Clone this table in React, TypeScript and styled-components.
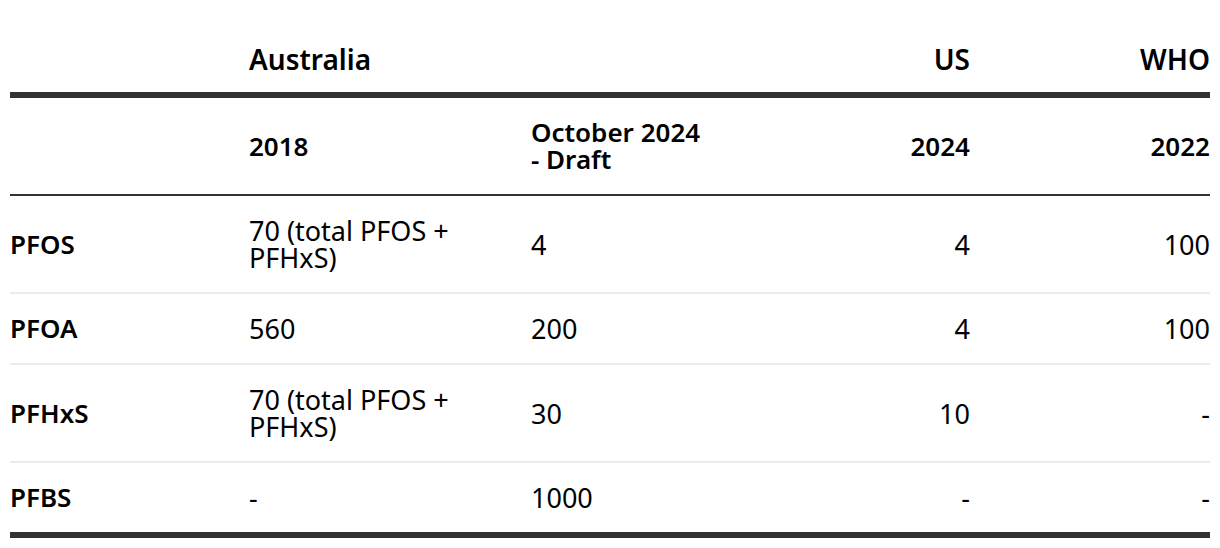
import React from "react";
import styled, { createGlobalStyle } from "styled-components";

const Global = createGlobalStyle`
  html, body { margin: 0; padding: 0; background: #fff; }
  body { font-family: "Noto Sans", "Open Sans", sans-serif; color: #000; }
`;

const Page = styled.div`
  padding: 44px 10px 0;
`;

const Table = styled.table`
  width: 1200px;
  border-collapse: collapse;
  table-layout: fixed;
`;

const Th = styled.th<{ $align?: "left" | "right" }>`
  text-align: ${(p) => p.$align ?? "left"};
  font-weight: 600;
  font-size: 26px;
  padding: 0;
  vertical-align: middle;
`;

const GroupRow = styled.tr`
  & > th {
    font-size: 28px;
    padding-bottom: 17px;
    line-height: 31px;
    border-bottom: 6px solid #333;
  }
`;

const YearRow = styled.tr`
  & > th {
    padding: 21px 0;
    line-height: 27px;
    border-bottom: 2px solid #333;
  }
`;

const BodyRow = styled.tr<{ $last?: boolean }>`
  & > td, & > th {
    padding: 21px 0;
    line-height: 27px;
    border-bottom: ${(p) => (p.$last ? "6px solid #333" : "2px solid #ebebeb")};
  }
`;

const Td = styled.td<{ $align?: "left" | "right" }>`
  text-align: ${(p) => p.$align ?? "left"};
  font-size: 27px;
  font-weight: 400;
  padding: 0;
  vertical-align: middle;
`;

const rows = [
  { name: "PFOS", au2018: "70 (total PFOS + PFHxS)", au2024: "4", us: "4", who: "100" },
  { name: "PFOA", au2018: "560", au2024: "200", us: "4", who: "100" },
  { name: "PFHxS", au2018: "70 (total PFOS + PFHxS)", au2024: "30", us: "10", who: "-" },
  { name: "PFBS", au2018: "-", au2024: "1000", us: "-", who: "-" },
];

export default function App() {
  return (
    <Page>
      <Global />
      <Table>
        <colgroup>
          <col style={{ width: 239 }} />
          <col style={{ width: 282 }} />
          <col style={{ width: 282 }} />
          <col style={{ width: 157 }} />
          <col style={{ width: 240 }} />
        </colgroup>
        <thead>
          <GroupRow>
            <Th />
            <Th colSpan={2}>Australia</Th>
            <Th $align="right">US</Th>
            <Th $align="right">WHO</Th>
          </GroupRow>
          <YearRow>
            <Th />
            <Th>2018</Th>
            <Th>
              October 2024
              <br />- Draft
            </Th>
            <Th $align="right">2024</Th>
            <Th $align="right">2022</Th>
          </YearRow>
        </thead>
        <tbody>
          {rows.map((r, i) => (
            <BodyRow key={r.name} $last={i === rows.length - 1}>
              <Th scope="row">{r.name}</Th>
              <Td>{r.au2018}</Td>
              <Td>{r.au2024}</Td>
              <Td $align="right">{r.us}</Td>
              <Td $align="right">{r.who}</Td>
            </BodyRow>
          ))}
        </tbody>
      </Table>
    </Page>
  );
}
